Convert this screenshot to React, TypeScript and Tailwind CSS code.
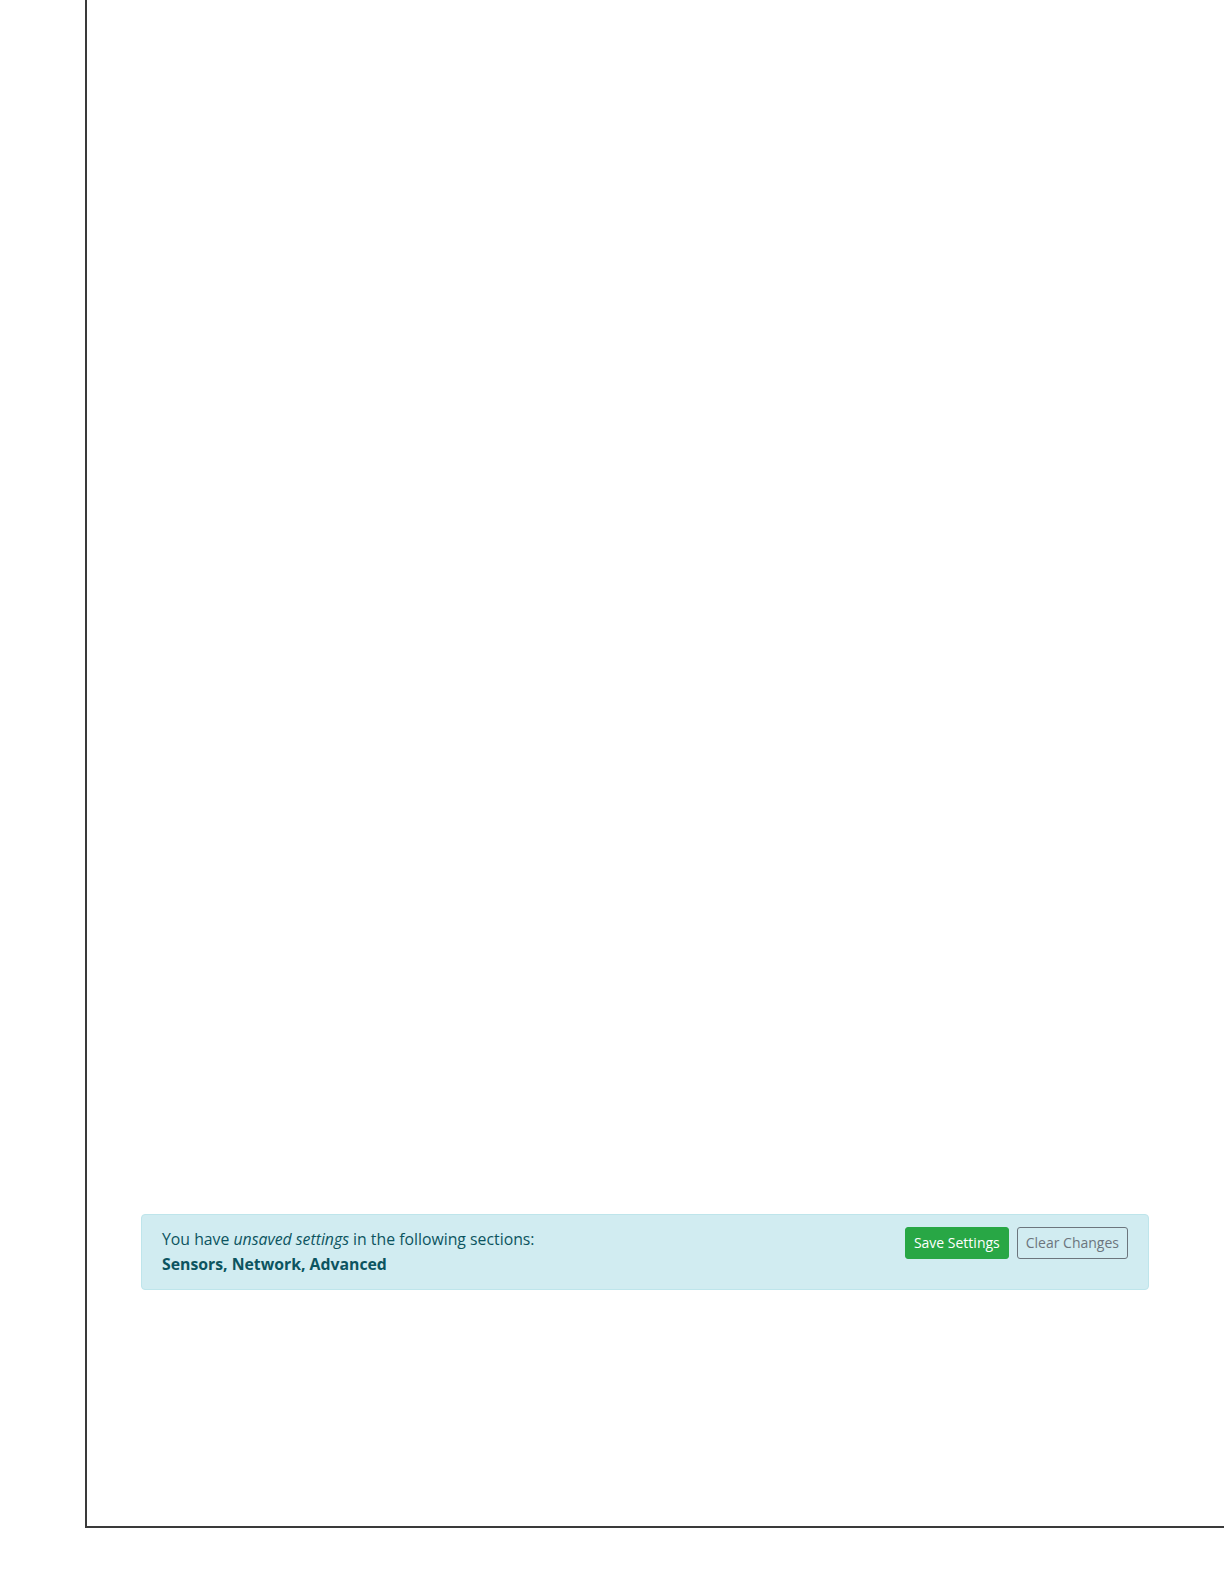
export default function App() {
  return (
    <div className="w-[1224px] h-[1584px] overflow-hidden bg-white" style={{ fontFamily: '"Open Sans", "Noto Sans", sans-serif' }}>
      {/* outer frame: only left and bottom edges fall inside the viewport */}
      <div className="ml-[85px] w-[1200px] h-[1528px] border-l-2 border-b-2 border-[#3a3a3a] flex flex-col justify-end pb-[236px]">
        <div className="ml-[54px] w-[1008px] rounded border border-[#bee5eb] bg-[#d1ecf1] text-[#0c5460] px-5 py-3 flex items-start justify-between">
          <div className="text-[15.8px] leading-[25px]">
            <p>
              You have <em>unsaved settings</em> in the following sections:
            </p>
            <p className="font-bold">Sensors, Network, Advanced</p>
          </div>
          <div className="flex gap-2">
            <button className="rounded-[3px] border border-[#28a745] bg-[#28a745] px-2 py-1 text-[14px] leading-[22px] text-white">
              Save Settings
            </button>
            <button className="rounded-[3px] border border-[#6c757d] bg-transparent px-2 py-1 text-[14px] leading-[22px] text-[#6c757d]">
              Clear Changes
            </button>
          </div>
        </div>
      </div>
    </div>
  );
}
